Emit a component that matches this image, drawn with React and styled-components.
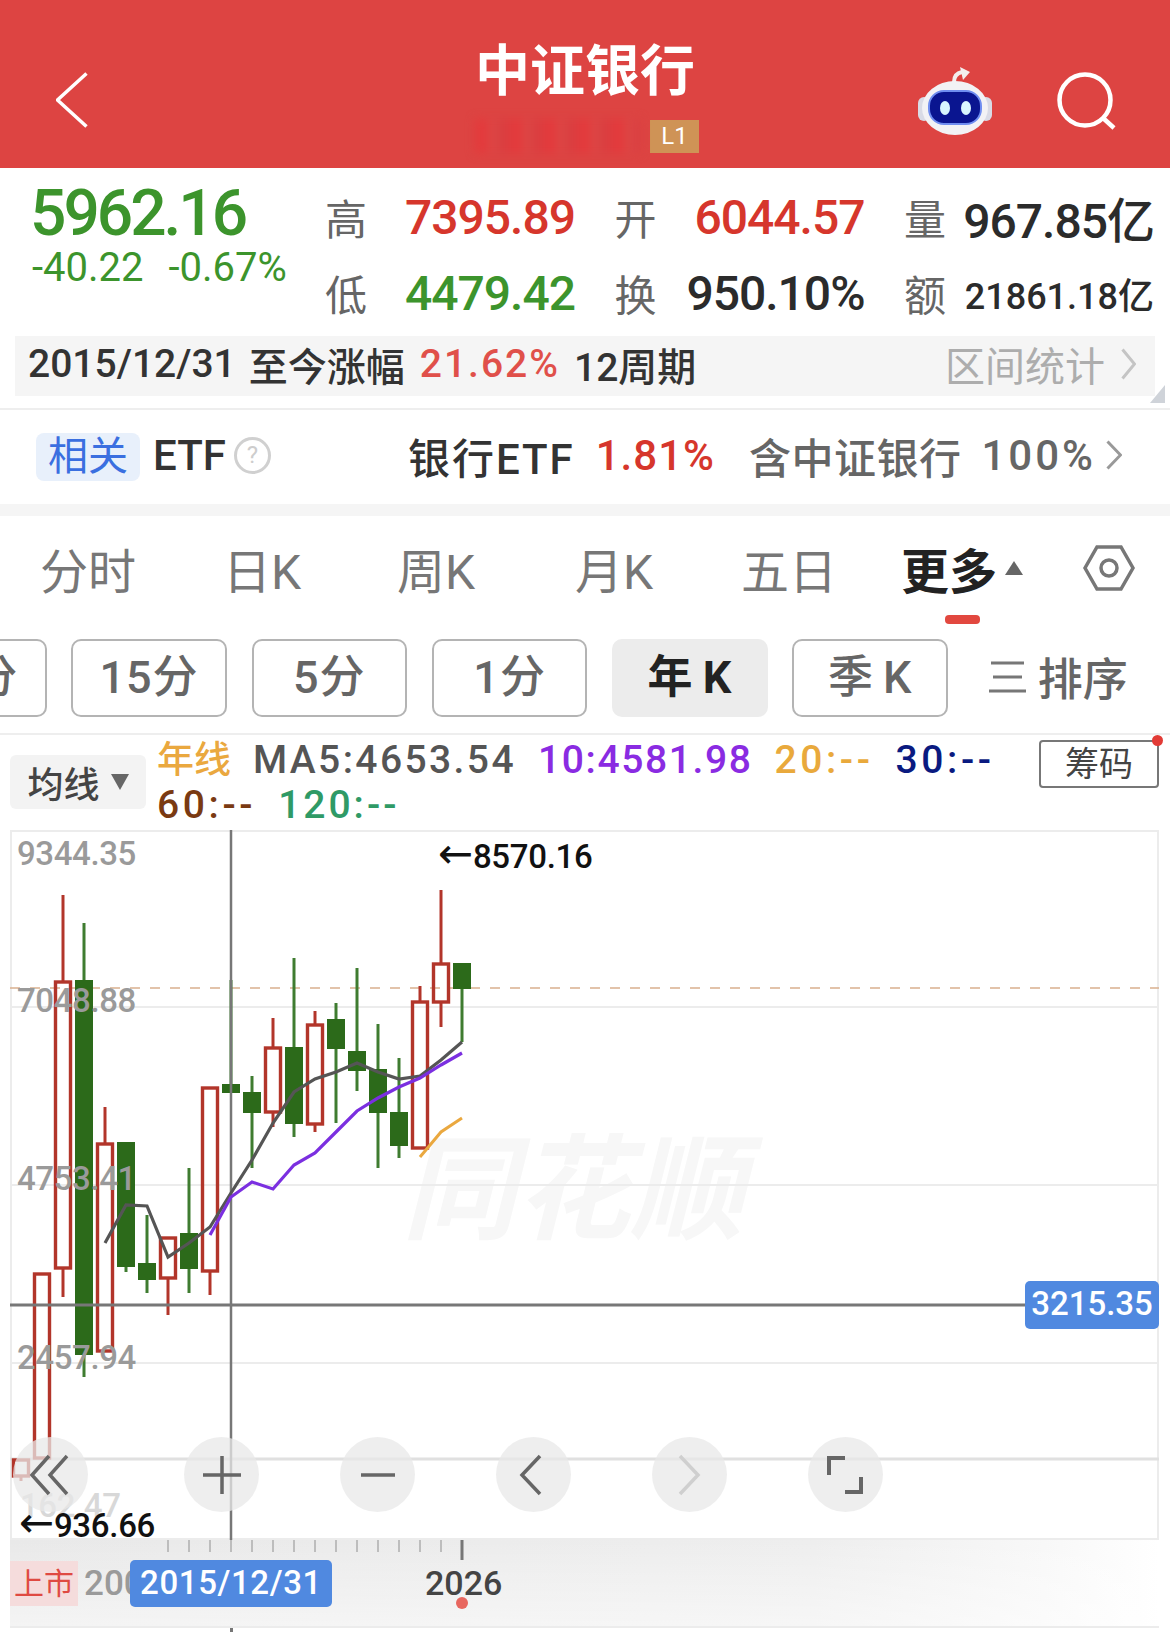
import React from "react";
import styled, { createGlobalStyle } from "styled-components";

const GlobalStyle = createGlobalStyle`
  html, body { margin: 0; padding: 0; background: #fff; }
  * { box-sizing: border-box; }
  body { font-family: Roboto, "Noto Sans CJK SC", sans-serif; }
`;

const RED = "#d6362c";
const GREEN = "#3c942c";
const BLUE_TAG = "#5089e0";
const SANS = `Roboto, "Noto Sans CJK SC", sans-serif`;

const Page = styled.div`
  width: 1170px;
  height: 1632px;
  overflow: hidden;
  background: #fff;
  font-family: ${SANS};
`;

/* header */
const Header = styled.header`
  height: 168px;
  background: #dd4442;
  display: grid;
  grid-template-columns: 1fr auto 1fr;
`;
const BackCell = styled.div`
  padding: 72px 0 0 56px;
`;
const TitleCell = styled.div`
  padding-top: 42px;
  display: flex;
  flex-direction: column;
  align-items: center;
`;
const Title = styled.h1`
  margin: 0;
  font-size: 55px;
  line-height: 58px;
  font-weight: 700;
  color: #fff;
`;
const SubRow = styled.div`
  margin-top: 19px;
  display: flex;
  align-items: center;
  gap: 10px;
  margin-left: 4px;
`;
const Blurred = styled.div`
  width: 165px;
  height: 34px;
  filter: blur(5px);
  background: repeating-linear-gradient(90deg, #e33a3c 0 14px, #dc4846 14px 22px, #da3e40 22px 34px);
`;
const Level = styled.span`
  width: 49px;
  height: 33px;
  background: #cf9356;
  color: #fff;
  font-size: 24px;
  line-height: 33px;
  text-align: center;
`;
const RightCell = styled.div`
  display: flex;
  justify-content: flex-end;
  padding: 67px 53px 0 0;
  gap: 65px;
  & > svg + svg {
    margin-top: 5px;
  }
`;

/* quote */
const Quote = styled.section`
  height: 168px;
  padding-left: 31px;
  display: flex;
`;
const PriceCol = styled.div`
  width: 294px;
  padding-top: 16px;
  color: ${GREEN};
`;
const Price = styled.div`
  font-size: 64px;
  line-height: 60px;
  font-weight: 500;
  letter-spacing: -3px;
  margin-left: -1px;
`;
const Change = styled.div`
  display: flex;
  gap: 25px;
  margin-top: 2px;
  font-size: 40px;
  line-height: 44px;
  margin-left: 1px;
`;
const Stats = styled.div`
  padding-top: 11px;
  display: grid;
  grid-template-columns: repeat(3, 250px);
  grid-auto-rows: 76px;
  column-gap: 39.5px;
`;
const Stat = styled.div`
  display: flex;
  justify-content: space-between;
  align-items: center;
`;
const StatLabel = styled.span`
  font-size: 42px;
  color: #666;
  margin-top: -1px;
`;
const StatValue = styled.span`
  font-size: ${(p) => p.$size || 48}px;
  font-weight: 500;
  letter-spacing: ${(p) => (p.$size ? 0 : -1)}px;
  color: ${(p) => p.$color || "#2b2b2b"};
  white-space: nowrap;
`;

const RangeBar = styled.div`
  position: relative;
  height: 60px;
  margin: 0 15px;
  padding: 0 19px 4px 13px;
  background: #f5f5f5;
  display: flex;
  align-items: center;
  font-size: 39px;
  color: #333;
  font-weight: 500;
  white-space: nowrap;
`;
const RangePart = styled.span`
  margin-right: ${(p) => p.$gap || 15}px;
  letter-spacing: ${(p) => p.$track || 0}px;
  color: ${(p) => p.$color || "inherit"};
`;
const RangeStat = styled.span`
  margin-left: auto;
  display: flex;
  align-items: center;
  gap: 16px;
  color: #adadad;
  font-size: 40px;
  font-weight: 400;
`;
const Corner = styled.i`
  position: absolute;
  right: -10px;
  bottom: -7px;
  border-style: solid;
  border-width: 0 0 18px 15px;
  border-color: transparent transparent #cfd3d9 transparent;
`;

/* etf */
const EtfRow = styled.div`
  margin-top: 12px;
  height: 96px;
  border-top: 2px solid #eee;
  display: flex;
  align-items: center;
  padding: 0 0 4px 36px;
  white-space: nowrap;
`;
const BlueTag = styled.span`
  width: 104px;
  height: 48px;
  border-radius: 8px;
  background: #e8f0fb;
  color: #3a6fe0;
  font-size: 40px;
  line-height: 48px;
  text-align: center;
  margin: 4px 13px 0 0;
`;
const EtfName = styled.span`
  font-size: 42px;
  font-weight: 500;
  color: ${(p) => p.$color || "#333"};
  margin-right: ${(p) => p.$gap || 0}px;
  letter-spacing: ${(p) => p.$track || 0}px;
`;
const Help = styled.span`
  width: 37px;
  height: 37px;
  margin: 0 137px 0 8px;
  border-radius: 50%;
  border: 3px solid #d0d0d0;
  color: #cdcdcd;
  font-size: 24px;
  line-height: 31px;
  text-align: center;
`;
const Band = styled.div`
  height: 12px;
  background: #f5f5f5;
`;

/* tabs */
const Tabs = styled.nav`
  position: relative;
  height: 111px;
  padding: 0 0 8px 40px;
  display: grid;
  grid-template-columns: 183px 174px 178px 166px 160px 182px auto;
  align-items: center;
`;
const Tab = styled.span`
  font-size: 48px;
  color: ${(p) => (p.$active ? "#222" : "#777")};
  font-weight: ${(p) => (p.$active ? 700 : 400)};
  display: flex;
  align-items: center;
  gap: 8px;
`;
const Caret = styled.i`
  border-style: solid;
  border-width: ${(p) => (p.$down ? "16px 9px 0 9px" : "0 9px 14px 9px")};
  border-color: ${(p) =>
    p.$down ? "#666 transparent transparent transparent" : "transparent transparent #666 transparent"};
`;
const Indicator = styled.i`
  position: absolute;
  left: 945px;
  bottom: 3px;
  width: 35px;
  height: 9px;
  border-radius: 4px;
  background: #e2483f;
`;

const Chips = styled.div`
  height: 78px;
  margin: 12px 0 0 -109px;
  display: flex;
  gap: 24.8px;
`;
const Chip = styled.span`
  flex: none;
  width: 155.5px;
  height: 78px;
  border-radius: 10px;
  border: ${(p) => (p.$active ? "0" : "2px solid #b4b4b4")};
  background: ${(p) => (p.$active ? "#ececec" : "#fff")};
  color: ${(p) => (p.$active ? "#222" : "#666")};
  font-weight: ${(p) => (p.$active ? 700 : 500)};
  font-size: 45px;
  letter-spacing: 1px;
  word-spacing: -3px;
  line-height: ${(p) => (p.$active ? 78 : 74)}px;
  text-align: center;
`;
const SortChip = styled.span`
  flex: none;
  margin-left: 16px;
  padding-bottom: 3px;
  display: flex;
  align-items: center;
  gap: 12px;
  color: #666;
  font-size: 45px;
  font-weight: 500;
`;

/* moving averages */
const MaRow = styled.div`
  margin-top: 16px;
  height: 97px;
  border-top: 2px solid #eee;
  padding: 0 11px 0 10px;
  display: flex;
  align-items: flex-start;
`;
const MaSelect = styled.div`
  flex: none;
  width: 136px;
  height: 54px;
  margin-top: 20px;
  border-radius: 6px;
  background: #f3f3f3;
  color: #444;
  font-size: 36px;
  font-weight: 500;
  display: flex;
  align-items: center;
  justify-content: center;
  gap: 11px;
`;
const Legend = styled.div`
  width: 860px;
  margin-left: 11px;
  padding-top: 3px;
  display: flex;
  flex-wrap: wrap;
  column-gap: 22px;
`;
const LegendItem = styled.span`
  font-size: ${(p) => p.$size || 39}px;
  line-height: 45px;
  font-weight: 500;
  letter-spacing: ${(p) => p.$track ?? 1.6}px;
  white-space: nowrap;
  color: ${(p) => p.$color};
`;
const ChipsBtn = styled.div`
  position: relative;
  width: 120px;
  height: 48px;
  margin: 5px 0 0 auto;
  border: 2px solid #777;
  border-radius: 4px;
  color: #444;
  font-size: 34px;
  line-height: 44px;
  text-align: center;
`;
const NoticeDot = styled.i`
  position: absolute;
  top: -7px;
  right: -6px;
  width: 11px;
  height: 11px;
  border-radius: 50%;
  background: #e23b36;
`;

/* chart */
const ChartPanel = styled.div`
  position: relative;
  height: 710px;
  margin: 0 11px 0 10px;
`;
const ChartSvg = styled.svg`
  display: block;
  width: 100%;
  height: 100%;
`;
const Watermark = styled.text`
  font-family: "Noto Sans CJK SC", sans-serif;
  font-size: 114px;
  font-weight: 700;
  font-style: italic;
  fill: #f7f7f7;
`;
const AxisLabel = styled.text`
  font-family: Roboto, sans-serif;
  font-size: 33px;
  font-weight: 500;
  letter-spacing: -0.4px;
  fill: ${(p) => (p.$faded ? "#d8d8d8" : "#9a9a9a")};
`;
const ExtremeLabel = styled.text`
  font-family: Roboto, sans-serif;
  font-size: 33px;
  font-weight: 500;
  letter-spacing: -0.3px;
  fill: #111;
`;
const ArrowGlyph = styled.tspan`
  font-family: "DejaVu Sans", sans-serif;
  font-size: 42px;
  font-weight: 400;
`;
const CrossTag = styled.div`
  position: absolute;
  right: 0;
  top: 451px;
  width: 134px;
  height: 48px;
  border-radius: 5px;
  background: ${BLUE_TAG};
  color: #fff;
  font-size: 33px;
  line-height: 46px;
  font-weight: 500;
  text-align: center;
`;
const Controls = styled.div`
  position: absolute;
  left: 3px;
  top: 607px;
  display: flex;
  gap: 81px;
`;
const Control = styled.span`
  width: 75px;
  height: 75px;
  margin-right: ${(p) => (p.$first ? 15 : 0)}px;
  border-radius: 50%;
  background: rgba(232, 232, 232, 0.75);
  display: flex;
  align-items: center;
  justify-content: center;
`;

/* time axis */
const TimeAxis = styled.div`
  position: relative;
  height: 88px;
  margin: 0 11px 0 10px;
  border-bottom: 2px solid #ececec;
  background: linear-gradient(180deg, rgba(255, 255, 255, 0) 0, rgba(255, 255, 255, 0.5) 100%),
    linear-gradient(90deg, #e9e9e9 0, #eeeeee 70%, #f8f8f8 90%, #fff 100%);
  display: flex;
  align-items: flex-start;
  padding-top: 21px;
  overflow: hidden;
`;
const Ticks = styled.svg`
  position: absolute;
  left: 0;
  top: 0;
`;
const ListedTag = styled.span`
  width: 68px;
  height: 45px;
  background: #f5dcdc;
  color: #df4a42;
  font-size: 30px;
  line-height: 45px;
  text-align: center;
`;
const FirstYear = styled.span`
  margin-left: 6px;
  color: #9a9a9a;
  font-size: 35px;
  line-height: 45px;
  font-weight: 500;
`;
const DateTag = styled.span`
  position: absolute;
  left: 120px;
  top: 20px;
  width: 202px;
  height: 47px;
  border-radius: 5px;
  background: ${BLUE_TAG};
  color: #fff;
  font-size: 33px;
  letter-spacing: 0.6px;
  line-height: 45px;
  font-weight: 500;
  text-align: center;
`;
const YearLabel = styled.span`
  position: absolute;
  left: 415px;
  top: 21px;
  color: #444;
  font-size: 34px;
  line-height: 45px;
  font-weight: 500;
`;
const YearDot = styled.i`
  position: absolute;
  left: 446px;
  top: 57px;
  width: 12px;
  height: 12px;
  border-radius: 50%;
  background: #e8675f;
`;
const CrossStub = styled.div`
  width: 3px;
  height: 6px;
  margin-left: 230px;
  background: #777;
`;

// x, box top, box bottom, wick top, wick bottom (page coordinates)
const CANDLES = [
  { x: 21, t: 1460, b: 1476, wt: 1460, wb: 1481, up: true },
  { x: 42, t: 1274, b: 1458, wt: 1274, wb: 1458, up: true },
  { x: 63, t: 982, b: 1268, wt: 895, wb: 1297, up: true },
  { x: 84, t: 980, b: 1355, wt: 923, wb: 1377 },
  { x: 105, t: 1144, b: 1351, wt: 1107, wb: 1351, up: true },
  { x: 126, t: 1142, b: 1267, wt: 1142, wb: 1272 },
  { x: 147, t: 1263, b: 1280, wt: 1215, wb: 1293 },
  { x: 168, t: 1238, b: 1278, wt: 1238, wb: 1315, up: true },
  { x: 189, t: 1233, b: 1269, wt: 1168, wb: 1293 },
  { x: 210, t: 1088, b: 1271, wt: 1088, wb: 1295, up: true },
  { x: 231, t: 1084, b: 1093, wt: 980, wb: 1093 },
  { x: 252, t: 1092, b: 1113, wt: 1076, wb: 1168 },
  { x: 273, t: 1048, b: 1112, wt: 1018, wb: 1127, up: true },
  { x: 294, t: 1047, b: 1124, wt: 958, wb: 1137 },
  { x: 315, t: 1025, b: 1124, wt: 1011, wb: 1132, up: true },
  { x: 336, t: 1019, b: 1049, wt: 1003, wb: 1123 },
  { x: 357, t: 1051, b: 1071, wt: 968, wb: 1091 },
  { x: 378, t: 1069, b: 1113, wt: 1024, wb: 1168 },
  { x: 399, t: 1112, b: 1146, wt: 1058, wb: 1158 },
  { x: 420, t: 1002, b: 1148, wt: 986, wb: 1148, up: true },
  { x: 441, t: 964, b: 1002, wt: 890, wb: 1027, up: true },
  { x: 462, t: 963, b: 989, wt: 963, wb: 1042 },
];

const MA5 =
  "105,1243 126,1205 147,1206 168,1257 189,1243 210,1227 231,1193 252,1160 273,1123 294,1092 315,1079 336,1072 357,1063 378,1072 399,1079 420,1076 441,1060 462,1042";
const MA10 =
  "210,1235 231,1197 252,1182 273,1189 294,1165 315,1153 336,1132 357,1111 378,1098 399,1087 420,1078 441,1065 462,1053";
const MA20 = "420,1157 441,1132 462,1118";

const AXIS = [
  { y: 865, v: "9344.35" },
  { y: 1012, v: "7048.88" },
  { y: 1190, v: "4753.41" },
  { y: 1369, v: "2457.94" },
];

const Candle = ({ c }) => {
  const color = c.up ? "#b2352a" : "#2c6a1a";
  const wick = c.up ? "#b2352a" : "#3f7c30";
  if (c.up) {
    return (
      <g>
        <line x1={c.x} x2={c.x} y1={c.wt} y2={c.t} stroke={wick} strokeWidth="3" />
        <line x1={c.x} x2={c.x} y1={c.b} y2={c.wb} stroke={wick} strokeWidth="3" />
        <rect x={c.x - 7.5} y={c.t} width="15" height={c.b - c.t} fill="none" stroke={color} strokeWidth="3.4" />
      </g>
    );
  }
  return (
    <g>
      <line x1={c.x} x2={c.x} y1={c.wt} y2={c.wb} stroke={wick} strokeWidth="3" />
      <rect x={c.x - 9} y={c.t} width="18" height={c.b - c.t} fill={color} />
    </g>
  );
};

const Chevron = ({ dir = "right", w = 16, h = 30, color = "#bbb", sw = 3 }) => (
  <svg width={w} height={h} viewBox={`0 0 ${w} ${h}`} fill="none">
    <polyline
      points={dir === "right" ? `1.5,1.5 ${w - 1.5},${h / 2} 1.5,${h - 1.5}` : `${w - 1.5},1.5 1.5,${h / 2} ${w - 1.5},${h - 1.5}`}
      stroke={color}
      strokeWidth={sw}
    />
  </svg>
);

const Robot = () => (
  <svg width="74" height="68" viewBox="0 0 74 68">
    <path d="M36 15c0-6 3-9 8-10" fill="none" stroke="#f3eeee" strokeWidth="4" />
    <path d="M42 0l10 5-7 8z" fill="#f3eeee" />
    <rect x="0" y="30" width="12" height="24" rx="6" fill="#d9dbe6" />
    <rect x="62" y="30" width="12" height="24" rx="6" fill="#d9dbe6" />
    <ellipse cx="37" cy="41" rx="33" ry="27" fill="#f2f2f5" />
    <rect x="11" y="24" width="52" height="33" rx="15" fill="#0a1590" stroke="#6f8df0" strokeWidth="2" />
    <ellipse cx="27" cy="41" rx="5" ry="7" fill="#d9f6ff" />
    <ellipse cx="48" cy="41" rx="5" ry="7" fill="#d9f6ff" />
  </svg>
);

const SearchIcon = () => (
  <svg width="60" height="58" viewBox="0 0 60 58" fill="none" stroke="#fff" strokeWidth="4.5">
    <circle cx="28" cy="28" r="25.5" />
    <line x1="46" y1="46" x2="57" y2="56" />
  </svg>
);

const GearIcon = () => (
  <svg width="52" height="46" viewBox="0 0 52 46" fill="none" stroke="#777" strokeWidth="3.5">
    <polygon points="14,2 38,2 50,23 38,44 14,44 2,23" />
    <circle cx="26" cy="23" r="8" />
  </svg>
);

const SortIcon = () => (
  <svg width="37" height="34" viewBox="0 0 37 34" stroke="#777" strokeWidth="3">
    <line x1="2" y1="3" x2="35" y2="3" />
    <line x1="4" y1="17" x2="33" y2="17" />
    <line x1="0" y1="31" x2="37" y2="31" />
  </svg>
);

const ControlIcon = ({ kind }) => {
  const stroke = kind === "next" ? "#cfcfcf" : "#666";
  return (
    <svg width="44" height="44" viewBox="0 0 44 44" fill="none" stroke={stroke} strokeWidth="3.5">
      {kind === "first" && <path d="M20 3 3 22l17 19M38 3 21 22l17 19" />}
      {kind === "plus" && <path d="M22 3v38M3 22h38" />}
      {kind === "minus" && <path d="M5 22h34" />}
      {kind === "prev" && <path d="M28 3 10 22l18 19" />}
      {kind === "next" && <path d="M12 3l18 19-18 19" />}
      {kind === "full" && <path d="M21 5H5v17M37 24v15H21" strokeWidth="4" />}
    </svg>
  );
};

const App = () => {
  const ticks = [];
  for (let x = 168; x <= 441; x += 21) ticks.push(x - 10);

  return (
    <Page>
      <GlobalStyle />
      <Header>
        <BackCell>
          <Chevron dir="left" w={32} h={56} color="#fff" sw={3.5} />
        </BackCell>
        <TitleCell>
          <Title>中证银行</Title>
          <SubRow>
            <Blurred />
            <Level>L1</Level>
          </SubRow>
        </TitleCell>
        <RightCell>
          <Robot />
          <SearchIcon />
        </RightCell>
      </Header>

      <Quote>
        <PriceCol>
          <Price>5962.16</Price>
          <Change>
            <span>-40.22</span>
            <span>-0.67%</span>
          </Change>
        </PriceCol>
        <Stats>
          <Stat>
            <StatLabel>高</StatLabel>
            <StatValue $color={RED}>7395.89</StatValue>
          </Stat>
          <Stat>
            <StatLabel>开</StatLabel>
            <StatValue $color={RED}>6044.57</StatValue>
          </Stat>
          <Stat>
            <StatLabel>量</StatLabel>
            <StatValue>967.85亿</StatValue>
          </Stat>
          <Stat>
            <StatLabel>低</StatLabel>
            <StatValue $color={GREEN}>4479.42</StatValue>
          </Stat>
          <Stat>
            <StatLabel>换</StatLabel>
            <StatValue>950.10%</StatValue>
          </Stat>
          <Stat>
            <StatLabel>额</StatLabel>
            <StatValue $size={36}>21861.18亿</StatValue>
          </Stat>
        </Stats>
      </Quote>

      <RangeBar>
        <RangePart $gap={13}>2015/12/31</RangePart>
        <RangePart>至今涨幅</RangePart>
        <RangePart $color="#e0504a" $track={2} $gap={14}>
          21.62%
        </RangePart>
        <RangePart>12周期</RangePart>
        <RangeStat>
          区间统计
          <Chevron w={15} h={32} color="#c4c4c4" />
        </RangeStat>
        <Corner />
      </RangeBar>

      <EtfRow>
        <BlueTag>相关</BlueTag>
        <EtfName>ETF</EtfName>
        <Help>?</Help>
        <EtfName $gap={21} $track={2}>
          银行ETF
        </EtfName>
        <EtfName $color="#d6362c" $gap={34} $track={1}>
          1.81%
        </EtfName>
        <EtfName $color="#666" $gap={20} $track={0.5}>
          含中证银行
        </EtfName>
        <EtfName $color="#666" $gap={10} $track={3}>
          100%
        </EtfName>
        <Chevron w={16} h={30} color="#999" />
      </EtfRow>
      <Band />

      <Tabs>
        <Tab>分时</Tab>
        <Tab>日K</Tab>
        <Tab>周K</Tab>
        <Tab>月K</Tab>
        <Tab>五日</Tab>
        <Tab $active>
          更多
          <Caret />
        </Tab>
        <GearIcon />
        <Indicator />
      </Tabs>

      <Chips>
        <Chip>30分</Chip>
        <Chip>15分</Chip>
        <Chip>5分</Chip>
        <Chip>1分</Chip>
        <Chip $active>年 K</Chip>
        <Chip>季 K</Chip>
        <SortChip>
          <SortIcon />
          排序
        </SortChip>
      </Chips>

      <MaRow>
        <MaSelect>
          均线
          <Caret $down />
        </MaSelect>
        <Legend>
          <LegendItem $color="#eaa83f" $size={37} $track={0}>
            年线
          </LegendItem>
          <LegendItem $color="#555" $track={2.4}>
            MA5:4653.54
          </LegendItem>
          <LegendItem $color="#8a2be2">10:4581.98</LegendItem>
          <LegendItem $color="#e9a93c" $track={3.6}>
            20:--
          </LegendItem>
          <LegendItem $color="#0a1a80" $track={3.6}>
            30:--
          </LegendItem>
          <LegendItem $color="#7a3a12" $track={3.6}>
            60:--
          </LegendItem>
          <LegendItem $color="#2f9a66" $track={3}>
            120:--
          </LegendItem>
        </Legend>
        <ChipsBtn>
          筹码
          <NoticeDot />
        </ChipsBtn>
      </MaRow>

      <ChartPanel>
        <ChartSvg viewBox="10 830 1149 710">
          <Watermark x="402" y="1230">
            同花顺
          </Watermark>
          <rect x="11" y="831" width="1147" height="708" fill="none" stroke="#ececec" strokeWidth="2" />
          {[1007, 1185, 1363].map((y) => (
            <line key={y} x1="10" x2="1159" y1={y} y2={y} stroke="#ececec" strokeWidth="2" />
          ))}
          <line x1="10" x2="1159" y1="1459" y2="1459" stroke="#e0e0e0" strokeWidth="3" />
          <line x1="10" x2="1159" y1="988" y2="988" stroke="#d9b08e" strokeWidth="1.5" strokeDasharray="10 10" />
          {CANDLES.map((c) => (
            <Candle key={c.x} c={c} />
          ))}
          <line x1="231" x2="231" y1="830" y2="1540" stroke="#777" strokeWidth="2.5" />
          <line x1="10" x2="1030" y1="1305" y2="1305" stroke="#777" strokeWidth="3" />
          <polyline points={MA5} fill="none" stroke="#555" strokeWidth="3.2" />
          <polyline points={MA10} fill="none" stroke="#7b2fe0" strokeWidth="3.2" />
          <polyline points={MA20} fill="none" stroke="#eaa83f" strokeWidth="3" />
          {AXIS.map((a) => (
            <AxisLabel key={a.v} x="17" y={a.y}>
              {a.v}
            </AxisLabel>
          ))}
          <AxisLabel $faded x="20" y="1517">
            162.47
          </AxisLabel>
          <ExtremeLabel x="438" y="868">
            <ArrowGlyph>←</ArrowGlyph>8570.16
          </ExtremeLabel>
          <ExtremeLabel x="19" y="1537">
            <ArrowGlyph>←</ArrowGlyph>936.66
          </ExtremeLabel>
        </ChartSvg>
        <CrossTag>3215.35</CrossTag>
        <Controls>
          <Control $first>
            <ControlIcon kind="first" />
          </Control>
          <Control>
            <ControlIcon kind="plus" />
          </Control>
          <Control>
            <ControlIcon kind="minus" />
          </Control>
          <Control>
            <ControlIcon kind="prev" />
          </Control>
          <Control>
            <ControlIcon kind="next" />
          </Control>
          <Control>
            <ControlIcon kind="full" />
          </Control>
        </Controls>
      </ChartPanel>

      <TimeAxis>
        <Ticks width="500" height="22">
          {ticks.map((x) => (
            <line key={x} x1={x} x2={x} y1="0" y2="12" stroke="#bdbdbd" strokeWidth="2" />
          ))}
          <line x1="452" x2="452" y1="0" y2="20" stroke="#777" strokeWidth="3" />
        </Ticks>
        <ListedTag>上市</ListedTag>
        <FirstYear>200</FirstYear>
        <DateTag>2015/12/31</DateTag>
        <YearLabel>2026</YearLabel>
        <YearDot />
      </TimeAxis>
      <CrossStub />
    </Page>
  );
};

export default App;
